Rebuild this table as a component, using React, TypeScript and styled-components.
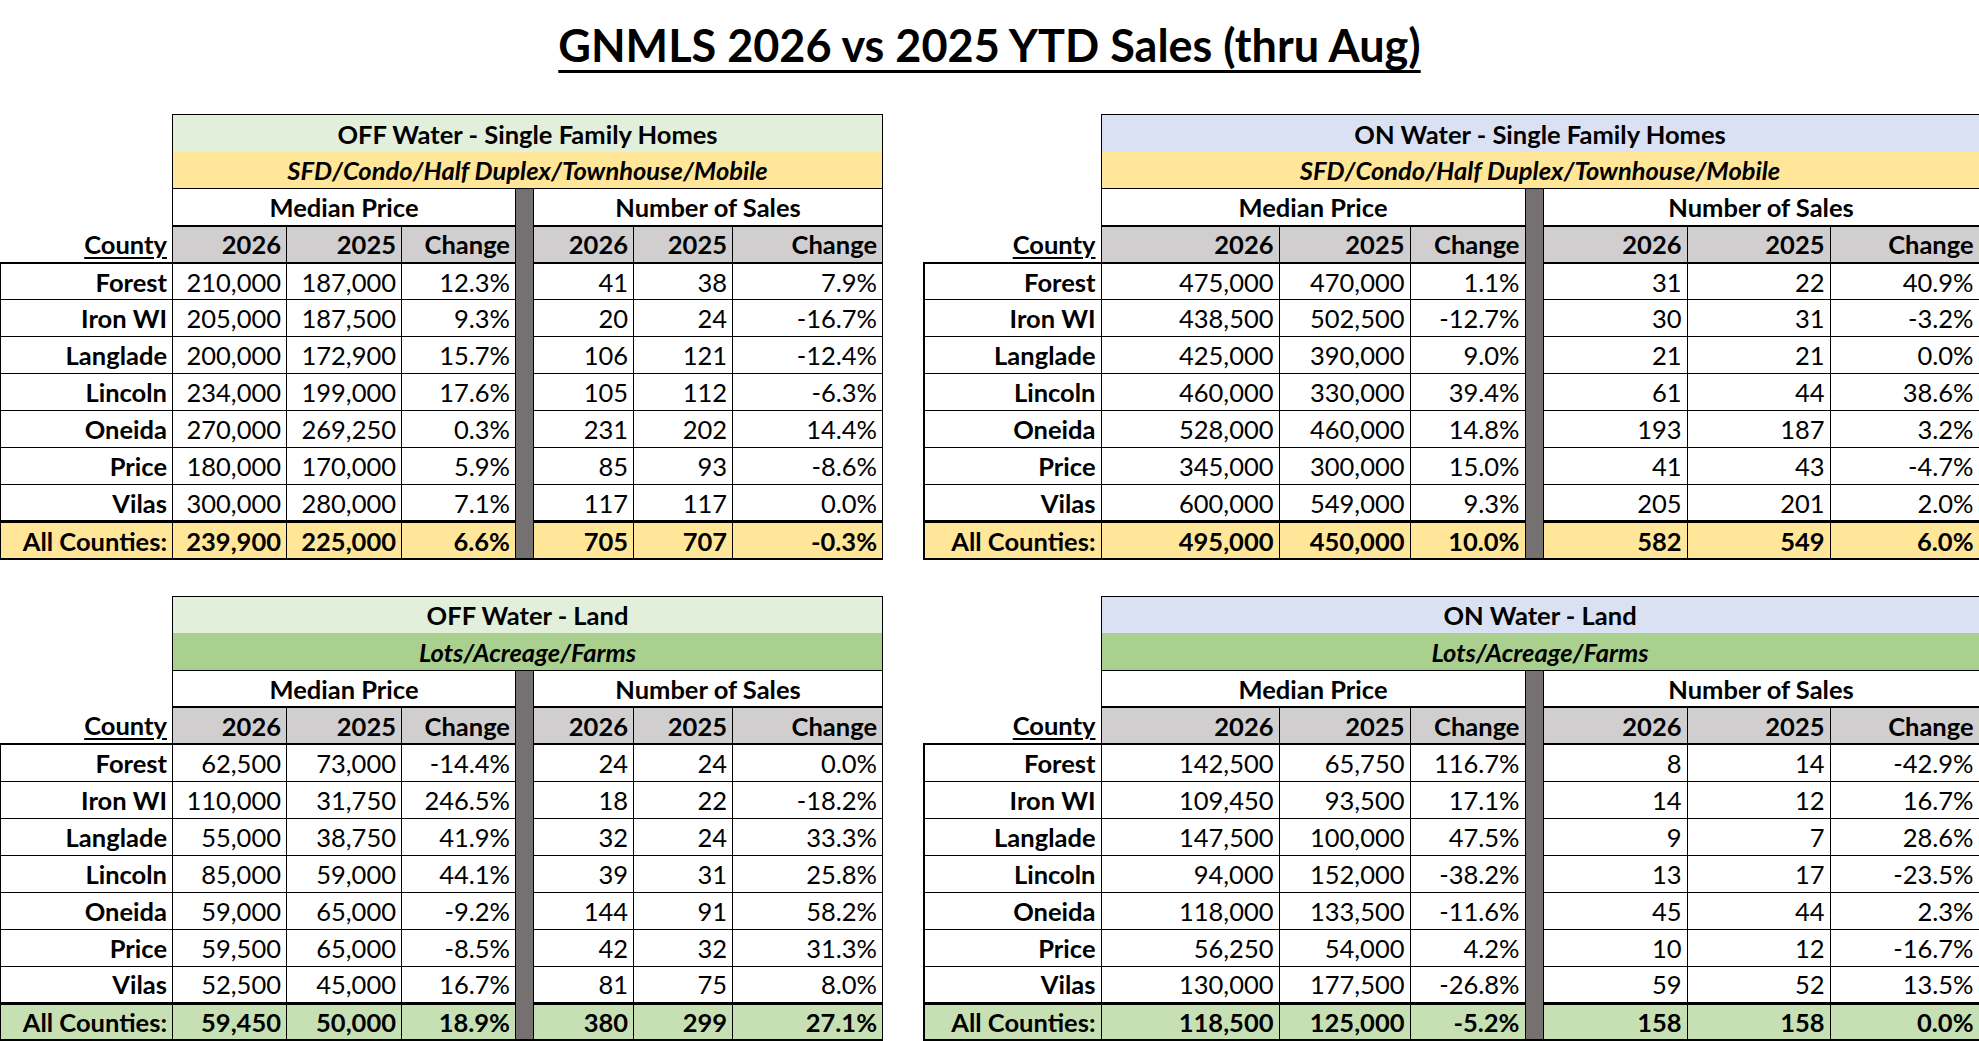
import React from 'react';
import styled, { createGlobalStyle } from 'styled-components';

const GlobalStyle = createGlobalStyle`
  html, body { margin: 0; padding: 0; background: #ffffff; }
  body { font-family: Lato, "Noto Sans", sans-serif; color: #000; }
`;

const Page = styled.div`
  width: 1979px;
  height: 1041px;
  overflow: hidden;
  display: flex;
  flex-direction: column;
`;

const Title = styled.h1`
  margin: 20px 0 0;
  text-align: center;
  font: 700 45px/50px Lato, sans-serif;
  text-decoration: underline;
  text-decoration-thickness: 3px;
  text-underline-offset: 8px;
`;

const Grid = styled.div`
  display: grid;
  grid-template-columns: 882px 1055px;
  column-gap: 41px;
  row-gap: 36px;
  margin-top: 44px;
`;

const Table = styled.table`
  border-collapse: collapse;
  table-layout: fixed;
  width: 100%;
  font-family: Lato, sans-serif;
  font-size: 25.5px;
  line-height: 1;
`;

const Col = styled.col<{ $w: number }>`
  width: ${(p) => p.$w}px;
`;

const Row = styled.tr`
  height: 37px;
`;

const Corner = styled.td`
  border: none;
  padding: 0;
`;

const Banner = styled.td<{ $bg: string }>`
  background: ${(p) => p.$bg};
  text-align: center;
  font-weight: 700;
  padding: 2px 0 0;
  border-top: 1px solid #000;
  border-left: 1px solid #000;
  border-right: 1px solid #000;
`;

const Subtitle = styled.td<{ $bg: string }>`
  background: ${(p) => p.$bg};
  text-align: center;
  font-weight: 700;
  font-style: italic;
  padding: 2px 0 0;
  border-left: 1px solid #000;
  border-right: 1px solid #000;
  border-bottom: 1px solid #000;
`;

const Group = styled.td`
  background: #fff;
  text-align: center;
  font-weight: 700;
  padding: 2px 0 0;
  border-left: 1px solid #000;
  border-right: 1px solid #000;
  border-bottom: 2px solid #000;
`;

const Sep = styled.td<{ $top?: boolean; $bottom?: boolean }>`
  background: #767171;
  padding: 0;
  border-left: 1px solid #000;
  border-right: 1px solid #000;
  border-top: ${(p) => (p.$top ? '1px solid #000' : 'hidden')};
  border-bottom: ${(p) => (p.$bottom ? '2px solid #000' : 'hidden')};
`;

const CountyHead = styled.td`
  text-align: right;
  font-weight: 700;
  text-decoration: underline;
  text-decoration-thickness: 2px;
  text-underline-offset: 3px;
  padding: 2px 5px 0;
  border-bottom: 2px solid #000;
`;

const Head = styled.td`
  background: #d0cece;
  text-align: right;
  font-weight: 700;
  padding: 2px 5px 0;
  border: 1px solid #000;
  border-bottom: 2px solid #000;
`;

const Cell = styled.td<{ $bold?: boolean; $bg?: string; $total?: boolean; $edge?: number }>`
  background: ${(p) => p.$bg || '#fff'};
  text-align: right;
  font-weight: ${(p) => (p.$bold ? 700 : 400)};
  padding: 2px 5px 0;
  border: 1px solid #000;
  ${(p) => (p.$edge ? `border-left: ${p.$edge}px solid #000;` : '')}
  ${(p) => (p.$total ? 'border-top: 3px solid #000; border-bottom: 2px solid #000;' : '')}
`;

type DataRow = [string, string, string, string, string, string, string];

interface TableSpec {
  title: string;
  subtitle: string;
  titleBg: string;
  subBg: string;
  totalBg: string;
  widths: number[];
  edge: number;
  rows: DataRow[];
  total: DataRow;
}

const SFD = 'SFD/Condo/Half Duplex/Townhouse/Mobile';
const LAND = 'Lots/Acreage/Farms';
const LEFT_W = [172, 114, 115, 114, 18, 100, 99, 150];
const RIGHT_W = [177, 178, 131, 115, 18, 144, 143, 149];

const tables: TableSpec[] = [
  {
    title: 'OFF Water - Single Family Homes',
    subtitle: SFD,
    titleBg: '#e2efda',
    subBg: '#ffe699',
    totalBg: '#ffe699',
    widths: LEFT_W,
    edge: 1,
    rows: [
      ['Forest', '210,000', '187,000', '12.3%', '41', '38', '7.9%'],
      ['Iron WI', '205,000', '187,500', '9.3%', '20', '24', '-16.7%'],
      ['Langlade', '200,000', '172,900', '15.7%', '106', '121', '-12.4%'],
      ['Lincoln', '234,000', '199,000', '17.6%', '105', '112', '-6.3%'],
      ['Oneida', '270,000', '269,250', '0.3%', '231', '202', '14.4%'],
      ['Price', '180,000', '170,000', '5.9%', '85', '93', '-8.6%'],
      ['Vilas', '300,000', '280,000', '7.1%', '117', '117', '0.0%'],
    ],
    total: ['All Counties:', '239,900', '225,000', '6.6%', '705', '707', '-0.3%'],
  },
  {
    title: 'ON Water - Single Family Homes',
    subtitle: SFD,
    titleBg: '#d9e1f2',
    subBg: '#ffe699',
    totalBg: '#ffe699',
    widths: RIGHT_W,
    edge: 2,
    rows: [
      ['Forest', '475,000', '470,000', '1.1%', '31', '22', '40.9%'],
      ['Iron WI', '438,500', '502,500', '-12.7%', '30', '31', '-3.2%'],
      ['Langlade', '425,000', '390,000', '9.0%', '21', '21', '0.0%'],
      ['Lincoln', '460,000', '330,000', '39.4%', '61', '44', '38.6%'],
      ['Oneida', '528,000', '460,000', '14.8%', '193', '187', '3.2%'],
      ['Price', '345,000', '300,000', '15.0%', '41', '43', '-4.7%'],
      ['Vilas', '600,000', '549,000', '9.3%', '205', '201', '2.0%'],
    ],
    total: ['All Counties:', '495,000', '450,000', '10.0%', '582', '549', '6.0%'],
  },
  {
    title: 'OFF Water - Land',
    subtitle: LAND,
    titleBg: '#e2efda',
    subBg: '#a9d08e',
    totalBg: '#c6e0b4',
    widths: LEFT_W,
    edge: 1,
    rows: [
      ['Forest', '62,500', '73,000', '-14.4%', '24', '24', '0.0%'],
      ['Iron WI', '110,000', '31,750', '246.5%', '18', '22', '-18.2%'],
      ['Langlade', '55,000', '38,750', '41.9%', '32', '24', '33.3%'],
      ['Lincoln', '85,000', '59,000', '44.1%', '39', '31', '25.8%'],
      ['Oneida', '59,000', '65,000', '-9.2%', '144', '91', '58.2%'],
      ['Price', '59,500', '65,000', '-8.5%', '42', '32', '31.3%'],
      ['Vilas', '52,500', '45,000', '16.7%', '81', '75', '8.0%'],
    ],
    total: ['All Counties:', '59,450', '50,000', '18.9%', '380', '299', '27.1%'],
  },
  {
    title: 'ON Water - Land',
    subtitle: LAND,
    titleBg: '#d9e1f2',
    subBg: '#a9d08e',
    totalBg: '#c6e0b4',
    widths: RIGHT_W,
    edge: 2,
    rows: [
      ['Forest', '142,500', '65,750', '116.7%', '8', '14', '-42.9%'],
      ['Iron WI', '109,450', '93,500', '17.1%', '14', '12', '16.7%'],
      ['Langlade', '147,500', '100,000', '47.5%', '9', '7', '28.6%'],
      ['Lincoln', '94,000', '152,000', '-38.2%', '13', '17', '-23.5%'],
      ['Oneida', '118,000', '133,500', '-11.6%', '45', '44', '2.3%'],
      ['Price', '56,250', '54,000', '4.2%', '10', '12', '-16.7%'],
      ['Vilas', '130,000', '177,500', '-26.8%', '59', '52', '13.5%'],
    ],
    total: ['All Counties:', '118,500', '125,000', '-5.2%', '158', '158', '0.0%'],
  },
];

function DataLine({ row, spec, total }: { row: DataRow; spec: TableSpec; total?: boolean }) {
  const bg = total ? spec.totalBg : undefined;
  return (
    <Row>
      <Cell $bold $bg={bg} $total={total} $edge={spec.edge}>
        {row[0]}
      </Cell>
      <Cell $bold={total} $bg={bg} $total={total}>{row[1]}</Cell>
      <Cell $bold={total} $bg={bg} $total={total}>{row[2]}</Cell>
      <Cell $bold={total} $bg={bg} $total={total}>{row[3]}</Cell>
      <Sep $bottom={total} />
      <Cell $bold={total} $bg={bg} $total={total}>{row[4]}</Cell>
      <Cell $bold={total} $bg={bg} $total={total}>{row[5]}</Cell>
      <Cell $bold={total} $bg={bg} $total={total}>{row[6]}</Cell>
    </Row>
  );
}

function SalesTable({ spec }: { spec: TableSpec }) {
  return (
    <Table>
      <colgroup>
        {spec.widths.map((w, i) => (
          <Col key={i} $w={w} />
        ))}
      </colgroup>
      <tbody>
        <Row>
          <Corner rowSpan={3} />
          <Banner colSpan={7} $bg={spec.titleBg}>
            {spec.title}
          </Banner>
        </Row>
        <Row>
          <Subtitle colSpan={7} $bg={spec.subBg}>
            {spec.subtitle}
          </Subtitle>
        </Row>
        <Row>
          <Group colSpan={3}>Median Price</Group>
          <Sep $top />
          <Group colSpan={3}>Number of Sales</Group>
        </Row>
        <Row>
          <CountyHead>County</CountyHead>
          <Head>2026</Head>
          <Head>2025</Head>
          <Head>Change</Head>
          <Sep />
          <Head>2026</Head>
          <Head>2025</Head>
          <Head>Change</Head>
        </Row>
        {spec.rows.map((r) => (
          <DataLine key={r[0]} row={r} spec={spec} />
        ))}
        <DataLine row={spec.total} spec={spec} total />
      </tbody>
    </Table>
  );
}

export default function App() {
  return (
    <Page>
      <GlobalStyle />
      <Title>GNMLS 2026 vs 2025 YTD Sales (thru Aug)</Title>
      <Grid>
        {tables.map((t) => (
          <SalesTable key={t.title} spec={t} />
        ))}
      </Grid>
    </Page>
  );
}
